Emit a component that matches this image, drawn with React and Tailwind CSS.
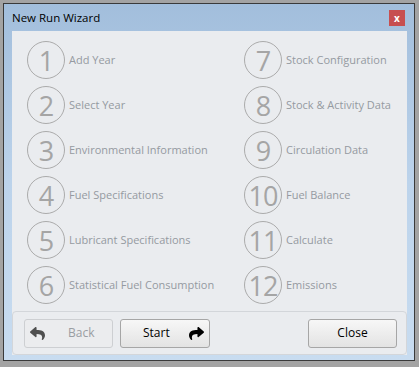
import React from "react";
import { FaReply, FaShare } from "react-icons/fa";

const leftSteps = [
  "Add Year",
  "Select Year",
  "Environmental Information",
  "Fuel Specifications",
  "Lubricant Specifications",
  "Statistical Fuel Consumption",
];

const rightSteps = [
  "Stock Configuration",
  "Stock & Activity Data",
  "Circulation Data",
  "Fuel Balance",
  "Calculate",
  "Emissions",
];

function Step({ num, label }) {
  return (
    <div className="flex items-center h-[38px]">
      <div className="w-[38px] h-[38px] shrink-0 rounded-full border-[1.5px] border-[#ababab] flex items-center justify-center text-[27px] text-[#a5a5a5] tracking-[-1px] leading-none">
        {num}
      </div>
      <span className="ml-[4px] text-[11px] text-[#959aa1] whitespace-nowrap">
        {label}
      </span>
    </div>
  );
}

export default function App() {
  return (
    <div
      className="w-[419px] h-[367px] bg-[#a3a3a3] pt-[3px] pl-[3px] pr-[4px] pb-[6px]"
      style={{ fontFamily: '"Open Sans", "Noto Sans", sans-serif' }}
    >
      <div className="h-full border border-[#3a3a3a] bg-gradient-to-b from-[#a2bedc] via-[#bcd3eb] to-[#c8dcf0] flex flex-col">
        {/* Title bar */}
        <div className="h-[27px] shrink-0 flex items-center justify-between pl-[8px] pr-[9px]">
          <span className="text-[11.5px] text-black">New Run Wizard</span>
          <div className="w-[16px] h-[16px] bg-[#c74f50] flex items-center justify-center text-white text-[10px] font-bold leading-none">
            x
          </div>
        </div>

        {/* Content */}
        <div className="flex-1 ml-[8px] mr-[7px] mb-[5px] bg-[#eaecef] flex flex-col">
          <div className="grid grid-cols-[217px_1fr] pl-[15px] pt-[10px]">
            <div className="flex flex-col gap-[7px]">
              {leftSteps.map((s, i) => (
                <Step key={s} num={i + 1} label={s} />
              ))}
            </div>
            <div className="flex flex-col gap-[7px]">
              {rightSteps.map((s, i) => (
                <Step key={s} num={i + 7} label={s} />
              ))}
            </div>
          </div>

          {/* Button panel */}
          <div className="mt-auto h-[44px] border border-[#d3d6da] rounded-[4px] flex items-center pl-[11px] pr-[9px]">
            <button className="w-[89px] h-[29px] border border-[#cdcfd2] rounded-[3px] bg-[#ebecee] flex items-center pl-[5px]">
              <FaReply className="text-[#4f4f4f] w-[15px] h-[15px]" />
              <span className="ml-[23px] text-[12px] text-[#9a9da2]">Back</span>
            </button>
            <button className="ml-[7px] w-[90px] h-[29px] border border-[#a6a6a6] rounded-[3px] bg-gradient-to-b from-[#f7f7f7] to-[#e3e3e3] flex items-center justify-between pl-[22px] pr-[5px]">
              <span className="text-[12px] text-black">Start</span>
              <FaShare className="text-black w-[15px] h-[15px]" />
            </button>
            <button className="ml-auto w-[89px] h-[29px] border border-[#a6a6a6] rounded-[3px] bg-gradient-to-b from-[#f7f7f7] to-[#e3e3e3] flex items-center justify-center">
              <span className="text-[12px] text-black">Close</span>
            </button>
          </div>
        </div>
      </div>
    </div>
  );
}
